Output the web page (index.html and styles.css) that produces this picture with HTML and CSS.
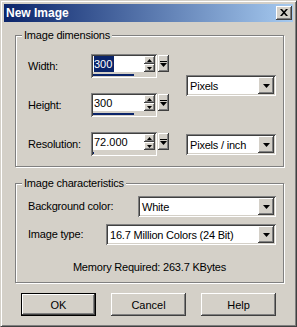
FILE: index.html
```html
<!DOCTYPE html>
<html lang="en">
<head>
    <meta charset="UTF-8">
    <meta name="viewport" content="width=device-width, initial-scale=1.0">
    <title>New Image</title>

    <link rel="stylesheet" href="styles.css">
</head>
<body>
    <div class="window">
        <div class="titlebar">
            <span class="title">New Image</span>
            <span class="close-btn raised">
                <svg width="8" height="7" viewBox="0 0 8 7"><path d="M0 0h2l2 2.2L6 0h2L5 3.5 8 7H6L4 4.8 2 7H0l3-3.5z" fill="#000"/></svg>
            </span>
        </div>

        <div class="content">
            <div class="group dims">
                <div class="group-title">Image dimensions</div>
                <div class="dims-grid">
                    <label class="field-label">Width:</label>
                    <div class="spin-wrap">
                        <div class="spin-box sunken">
                            <div class="spin-top">
                                <span class="spin-value"><span class="selected">300</span></span>
                                <div class="spin-arrows">
                                    <span class="arrow-btn raised"><svg width="5" height="3" viewBox="0 0 5 3"><path d="M2.5 0L5 3H0z" fill="#000"/></svg></span>
                                    <span class="arrow-btn raised"><svg width="5" height="3" viewBox="0 0 5 3"><path d="M0 0h5L2.5 3z" fill="#000"/></svg></span>
                                </div>
                            </div>
                            <div class="spin-track"><div class="spin-fill" style="width: 41px"></div></div>
                        </div>
                        <span class="slider-btn raised"><svg width="7" height="6" viewBox="0 0 7 6"><path d="M0 0h7v1H0zM0 2h7L3.5 6z" fill="#000"/></svg></span>
                    </div>
                    <div class="select unit-select sunken">
                        <span class="select-text">Pixels</span>
                        <span class="drop-btn raised"><svg width="7" height="4" viewBox="0 0 7 4"><path d="M0 0h7L3.5 4z" fill="#000"/></svg></span>
                    </div>

                    <label class="field-label">Height:</label>
                    <div class="spin-wrap">
                        <div class="spin-box sunken">
                            <div class="spin-top">
                                <span class="spin-value">300</span>
                                <div class="spin-arrows">
                                    <span class="arrow-btn raised"><svg width="5" height="3" viewBox="0 0 5 3"><path d="M2.5 0L5 3H0z" fill="#000"/></svg></span>
                                    <span class="arrow-btn raised"><svg width="5" height="3" viewBox="0 0 5 3"><path d="M0 0h5L2.5 3z" fill="#000"/></svg></span>
                                </div>
                            </div>
                            <div class="spin-track"><div class="spin-fill" style="width: 41px"></div></div>
                        </div>
                        <span class="slider-btn raised"><svg width="7" height="6" viewBox="0 0 7 6"><path d="M0 0h7v1H0zM0 2h7L3.5 6z" fill="#000"/></svg></span>
                    </div>

                    <label class="field-label">Resolution:</label>
                    <div class="spin-wrap">
                        <div class="spin-box sunken">
                            <div class="spin-top">
                                <span class="spin-value">72.000</span>
                                <div class="spin-arrows">
                                    <span class="arrow-btn raised"><svg width="5" height="3" viewBox="0 0 5 3"><path d="M2.5 0L5 3H0z" fill="#000"/></svg></span>
                                    <span class="arrow-btn raised"><svg width="5" height="3" viewBox="0 0 5 3"><path d="M0 0h5L2.5 3z" fill="#000"/></svg></span>
                                </div>
                            </div>
                            <div class="spin-track"><div class="spin-fill" style="width: 1px"></div></div>
                        </div>
                        <span class="slider-btn raised"><svg width="7" height="6" viewBox="0 0 7 6"><path d="M0 0h7v1H0zM0 2h7L3.5 6z" fill="#000"/></svg></span>
                    </div>
                    <div class="select res-select sunken">
                        <span class="select-text">Pixels / inch</span>
                        <span class="drop-btn raised"><svg width="7" height="4" viewBox="0 0 7 4"><path d="M0 0h7L3.5 4z" fill="#000"/></svg></span>
                    </div>
                </div>
            </div>

            <div class="group chars">
                <div class="group-title">Image characteristics</div>
                <div class="form-row first">
                    <label class="field-label bg-label">Background color:</label>
                    <div class="select wide sunken">
                        <span class="select-text">White</span>
                        <span class="drop-btn raised"><svg width="7" height="4" viewBox="0 0 7 4"><path d="M0 0h7L3.5 4z" fill="#000"/></svg></span>
                    </div>
                </div>
                <div class="form-row">
                    <label class="field-label type-label">Image type:</label>
                    <div class="select wide sunken">
                        <span class="select-text">16.7 Million Colors (24 Bit)</span>
                        <span class="drop-btn raised"><svg width="7" height="4" viewBox="0 0 7 4"><path d="M0 0h7L3.5 4z" fill="#000"/></svg></span>
                    </div>
                </div>
                <div class="memory">Memory Required: 263.7 KBytes</div>
            </div>

            <div class="buttons">
                <button class="btn default">OK</button>
                <button class="btn">Cancel</button>
                <button class="btn">Help</button>
            </div>
        </div>
    </div>
</body>
</html>
```

FILE: styles.css
```css
body {
    margin: 0;
}

.window {
    width: 297px;
    height: 327px;
    box-sizing: border-box;
    background-color: #d4d0c8;
    border: 1px solid;
    border-color: #d4d0c8 #404040 #404040 #d4d0c8;
    box-shadow: inset 1px 1px #fff, inset -1px -1px #808080;
    padding: 3px;
    display: flex;
    flex-direction: column;
    font: 11px "Liberation Sans", Arial, sans-serif;
    letter-spacing: -0.2px;
    color: #000;
}

.raised {
    background-color: #d4d0c8;
    box-shadow: inset -1px -1px #404040, inset 1px 1px #fff, inset -2px -2px #808080;
}

.sunken {
    background-color: #fff;
    box-shadow: inset 1px 1px #808080, inset -1px -1px #fff, inset 2px 2px #404040, inset -2px -2px #d4d0c8;
}

/* title bar */
.titlebar {
    height: 18px;
    background: linear-gradient(to right, #0a246a, #a6caf0);
    display: flex;
    align-items: center;
    justify-content: space-between;
    padding: 0 1px 0 2px;
}

.title {
    color: #fff;
    font-weight: bold;
    font-size: 12px;
    letter-spacing: 0;
}

.close-btn {
    width: 16px;
    height: 14px;
    display: flex;
    align-items: center;
    justify-content: center;
}

.close-btn svg {
    margin: 0 1px 1px 0;
}

/* groups */
.content {
    flex: 1;
    padding: 13px 9px 0 11px;
}

.group {
    box-sizing: border-box;
    border: 1px solid #808080;
    box-shadow: inset 1px 1px #fff, 1px 1px #fff;
}

.group-title {
    width: fit-content;
    background-color: #d4d0c8;
    margin: -7px 0 0 6px;
    padding: 0 2px;
    line-height: 13px;
}

.dims {
    height: 132px;
}

.dims-grid {
    display: grid;
    grid-template-columns: 63px 95px 90px;
    grid-template-rows: 24px 24px 24px;
    row-gap: 15px;
    align-items: center;
    margin: 12px 0 0 12px;
}

.unit-select {
    grid-column: 3;
    grid-row: 1 / span 2;
}

.res-select {
    grid-column: 3;
    grid-row: 3;
    margin-top: 1px;
}

.field-label {
    line-height: 13px;
}

/* spin fields */
.spin-wrap {
    display: flex;
    align-items: flex-start;
    height: 24px;
}

.spin-box {
    box-sizing: border-box;
    width: 66px;
    height: 24px;
    padding: 2px;
    display: flex;
    flex-direction: column;
}

.spin-top {
    display: flex;
    height: 16px;
    background-color: #fff;
}

.spin-value {
    flex: 1;
    line-height: 16px;
    padding-left: 1px;
    letter-spacing: 0;
}

.selected {
    background-color: #0a246a;
    color: #fff;
    display: inline-block;
    padding-right: 2px;
}

.spin-arrows {
    width: 11px;
    display: flex;
    flex-direction: column;
}

.arrow-btn {
    height: 8px;
    display: flex;
    align-items: center;
    justify-content: center;
}

.spin-track {
    flex: 1;
    background-color: #d4d0c8;
    display: flex;
    align-items: flex-end;
}

.spin-fill {
    height: 2px;
    background-color: #0a246a;
}

.slider-btn {
    width: 11px;
    height: 17px;
    margin: 1px 0 0 1px;
    display: flex;
    align-items: center;
    justify-content: center;
}

/* selects */
.select {
    box-sizing: border-box;
    height: 21px;
    width: 90px;
    padding: 2px;
    display: flex;
    align-items: center;
}

.select-text {
    flex: 1;
    padding-left: 2px;
    white-space: nowrap;
    overflow: hidden;
}

.drop-btn {
    width: 16px;
    height: 17px;
    display: flex;
    align-items: center;
    justify-content: center;
}

.chars {
    height: 100px;
    margin-top: 16px;
}

.form-row {
    display: flex;
    align-items: center;
    margin: 7px 7px 0 12px;
}

.form-row.first {
    margin-top: 6px;
}

.form-row .select {
    flex: 1;
    width: auto;
}

.bg-label {
    width: 110px;
}

.type-label {
    width: 78px;
}

.memory {
    text-align: center;
    line-height: 13px;
    margin-top: 16px;
}

/* buttons */
.buttons {
    display: flex;
    gap: 15px;
    margin: 10px 0 0 6px;
}

.btn {
    width: 75px;
    height: 23px;
    border: none;
    padding: 0;
    font: inherit;
    color: #000;
    background-color: #d4d0c8;
    box-shadow: inset -1px -1px #404040, inset 1px 1px #fff, inset -2px -2px #808080;
}

.btn.default {
    border: 1px solid #000;
    box-shadow: inset -1px -1px #404040, inset 1px 1px #fff, inset -2px -2px #808080;
}
```
